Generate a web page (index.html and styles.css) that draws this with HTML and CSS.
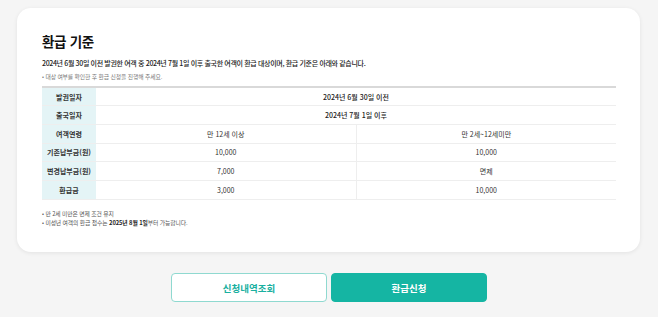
FILE: index.html
```html
<!DOCTYPE html>
<html lang="ko">
<head>
<meta charset="utf-8">
<link rel="stylesheet" href="styles.css">
</head>
<body>
<div class="page">
  <section class="card">
    <h1 class="title">환급 기준</h1>
    <p class="lead">2024년 6월 30일 이전 발권한 여객 중 2024년 7월 1일 이후 출국한 여객이 환급 대상이며, 환급 기준은 아래와 같습니다.</p>
    <p class="sub">• 대상 여부를 확인한 후 환급 신청을 진행해 주세요.</p>
    <table class="tbl">
      <tr><th>발권일자</th><td colspan="2" class="strong">2024년 6월 30일 이전</td></tr>
      <tr><th>출국일자</th><td colspan="2" class="strong">2024년 7월 1일 이후</td></tr>
      <tr><th>여객연령</th><td>만 12세 이상</td><td>만 2세~12세미만</td></tr>
      <tr><th>기존납부금(원)</th><td>10,000</td><td>10,000</td></tr>
      <tr><th>변경납부금(원)</th><td>7,000</td><td>면제</td></tr>
      <tr><th>환급금</th><td>3,000</td><td>10,000</td></tr>
    </table>
    <ul class="notes">
      <li>• 만 2세 미만은 면제 조건 유지</li>
      <li>• 미성년 여객의 환급 접수는 <b>2025년 8월 1일</b>부터 가능합니다.</li>
    </ul>
  </section>
  <div class="actions">
    <button class="btn btn-outline">신청내역조회</button>
    <button class="btn btn-fill">환급신청</button>
  </div>
</div>
</body>
</html>
```
FILE: styles.css
```css
* { box-sizing: border-box; }
html, body { margin: 0; padding: 0; }
body {
  background: #f5f5f5;
  font-family: "Noto Sans CJK KR", "Noto Sans", sans-serif;
  color: #222;
  width: 658px;
  height: 317px;
  overflow: hidden;
}
.page { padding: 8px 18px 0 17px; }
.card {
  background: #fff;
  border-radius: 14px;
  box-shadow: 0 1px 4px rgba(0,0,0,0.08);
  height: 244px;
  padding: 24px 24px 0 25px;
}
.title {
  margin: 0;
  font-size: 13.5px;
  font-weight: 700;
  line-height: 18px;
  color: #111;
  letter-spacing: -0.3px;
}
.lead {
  margin: 8px 0 0;
  font-size: 7px;
  line-height: 11px;
  font-weight: 500;
  color: #222;
  letter-spacing: -0.35px;
}
.sub {
  margin: 3px 0 0;
  font-size: 5.8px;
  line-height: 9px;
  color: #777;
  letter-spacing: -0.1px;
}
.tbl {
  margin-top: 5px;
  width: 574px;
  border-collapse: collapse;
  border-top: 2px solid #d9d9d9;
  table-layout: fixed;
}
.tbl tr { height: 18.7px; }
.tbl th, .tbl td {
  border-bottom: 1px solid #eeeeee;
  font-size: 7px;
  line-height: 10px;
  padding: 0;
  text-align: center;
  color: #333;
}
.tbl th {
  width: 54px;
  background: #e4f4f6;
  font-weight: 600;
  color: #333;
}
.tbl td + td { border-left: 1px solid #eeeeee; }
.tbl td.strong { font-weight: 500; color: #222; }
.notes {
  list-style: none;
  margin: 9px 0 0;
  padding: 0;
  font-size: 5.8px;
  line-height: 9px;
  color: #555;
  letter-spacing: -0.1px;
}
.notes b { color: #222; font-weight: 700; }
.actions {
  display: flex;
  justify-content: center;
  gap: 4px;
  margin-top: 21px;
  padding-left: 1px;
}
.btn {
  width: 156px;
  height: 29px;
  border-radius: 4px;
  font-family: "Noto Sans CJK KR", "Noto Sans", sans-serif;
  font-size: 9.5px;
  font-weight: 700;
  cursor: pointer;
}
.btn-outline {
  background: #fff;
  border: 1px solid #8fd9d0;
  color: #1ab0a0;
}
.btn-fill {
  background: #15b5a3;
  border: 1px solid #15b5a3;
  color: #fff;
}
```
